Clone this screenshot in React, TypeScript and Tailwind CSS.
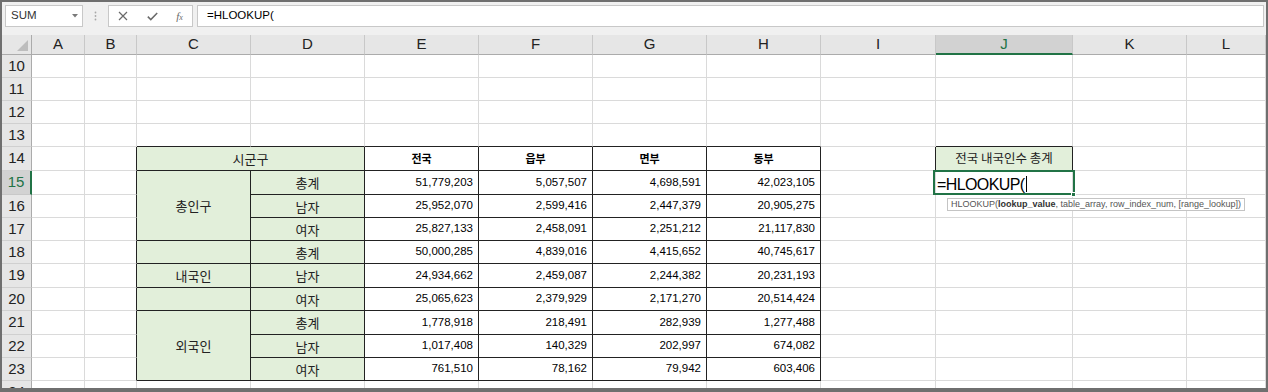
import React from "react";

type Kind = "label" | "head" | "num" | "title";
type Cell = { text?: string; kind?: Kind; rs?: number; cs?: number; fill?: boolean };

const COLS = ["A", "B", "C", "D", "E", "F", "G", "H", "I", "J", "K", "L"];
const ROWS = [10, 11, 12, 13, 14, 15, 16, 17, 18, 19, 20, 21, 22, 23, 24];

const NUMBERS: Record<number, string[]> = {
	15: ["51,779,203", "5,057,507", "4,698,591", "42,023,105"],
	16: ["25,952,070", "2,599,416", "2,447,379", "20,905,275"],
	17: ["25,827,133", "2,458,091", "2,251,212", "21,117,830"],
	18: ["50,000,285", "4,839,016", "4,415,652", "40,745,617"],
	19: ["24,934,662", "2,459,087", "2,244,382", "20,231,193"],
	20: ["25,065,623", "2,379,929", "2,171,270", "20,514,424"],
	21: ["1,778,918", "218,491", "282,939", "1,277,488"],
	22: ["1,017,408", "140,329", "202,997", "674,082"],
	23: ["761,510", "78,162", "79,942", "603,406"],
};

const ROW_SPAN: Record<number, string> = { 1: "", 3: "row-span-3" };
const COL_SPAN: Record<number, string> = { 1: "", 2: "col-span-2" };

const KIND_CLASS: Record<Kind, string> = {
	label: "justify-center font-['Noto_Sans_CJK_KR',sans-serif] text-[13px] text-[#222]",
	head: "justify-center font-['Noto_Sans_CJK_KR',sans-serif] text-[11px] font-bold text-black",
	num: "justify-end pr-[5px] text-[11.5px] text-black",
	title: "justify-center font-['Noto_Sans_CJK_KR',sans-serif] text-[12.5px] text-[#222]",
};

function buildCells() {
	const cells: Record<string, Cell> = {};
	cells.C14 = { text: "시군구", kind: "label", cs: 2, fill: true };
	["전국", "읍부", "면부", "동부"].forEach((t, i) => {
		cells[`${"EFGH"[i]}14`] = { text: t, kind: "head" };
	});
	cells.C15 = { text: "총인구", kind: "label", rs: 3, fill: true };
	cells.C18 = { kind: "label", fill: true };
	cells.C19 = { text: "내국인", kind: "label", fill: true };
	cells.C20 = { kind: "label", fill: true };
	cells.C21 = { text: "외국인", kind: "label", rs: 3, fill: true };
	const sub = ["총계", "남자", "여자"];
	for (let r = 15; r <= 23; r++) {
		cells[`D${r}`] = { text: sub[(r - 15) % 3], kind: "label", fill: true };
		NUMBERS[r].forEach((n, i) => {
			cells[`${"EFGH"[i]}${r}`] = { text: n, kind: "num" };
		});
	}
	cells.J14 = { text: "전국 내국인수 총계", kind: "title", fill: true };
	return cells;
}

const CELLS = buildCells();

// cells hidden under a merged range
const COVERED = new Set<string>();
Object.entries(CELLS).forEach(([key, cell]) => {
	const ci = COLS.indexOf(key[0]);
	const r = Number(key.slice(1));
	for (let dr = 0; dr < (cell.rs ?? 1); dr++)
		for (let dc = 0; dc < (cell.cs ?? 1); dc++)
			if (dr || dc) COVERED.add(`${COLS[ci + dc]}${r + dr}`);
});

function isBoxed(ci: number, r: number) {
	return (ci >= 2 && ci <= 7 && r >= 14 && r <= 23) || (ci === 9 && r === 14);
}

function FormulaBar() {
	return (
		<div className="flex h-[33px] items-start bg-[#f0f0f0] pl-[3px] pt-[3px]">
			<div className="flex h-[22px] w-[78px] items-center justify-between border border-[#c8c8c8] bg-white pl-[5px] pr-[4px]">
				<span className="text-[11.5px] text-[#333]">SUM</span>
				<svg width="6" height="4" viewBox="0 0 6 4">
					<path d="M0 0h6L3 3.5z" fill="#7a7a7a" />
				</svg>
			</div>
			<div className="flex h-[22px] w-[25px] items-center justify-center">
				<svg width="3" height="10" viewBox="0 0 3 10">
					<circle cx="1.5" cy="1.5" r="0.9" fill="#a8a8a8" />
					<circle cx="1.5" cy="5" r="0.9" fill="#a8a8a8" />
					<circle cx="1.5" cy="8.5" r="0.9" fill="#a8a8a8" />
				</svg>
			</div>
			<div className="flex h-[22px] w-[85px] items-center justify-around border border-[#c8c8c8] bg-white">
				<svg width="10" height="10" viewBox="0 0 10 10">
					<path d="M1 1l8 8M9 1l-8 8" stroke="#6a6a6a" strokeWidth="1.2" />
				</svg>
				<svg width="11" height="9" viewBox="0 0 11 9">
					<path d="M0.8 4.6l3 3L10.2 1" stroke="#6a6a6a" strokeWidth="1.5" fill="none" />
				</svg>
				<span className="font-['Liberation_Serif',serif] text-[11px] italic text-[#6a6a6a]">
					f<span className="text-[8px]">x</span>
				</span>
			</div>
			<div className="ml-[4px] mr-[2px] flex h-[22px] flex-1 items-center border border-[#c8c8c8] bg-white pl-[9px] text-[11.5px] text-black">
				=HLOOKUP(
			</div>
		</div>
	);
}

function RowHeader({ r }: { r: number }) {
	const active = r === 15;
	return (
		<div
			className={
				active
					? "flex items-center justify-center border-r-2 border-b border-r-[#217346] border-b-[#c8c8c8] bg-[#d2d2d2] text-[15px] text-[#217346]"
					: r === 24
						? "overflow-hidden border-r border-r-[#ababab] bg-[#e6e6e6] text-[15px] text-[#222]"
						: "flex items-center justify-center border-r border-b border-r-[#ababab] border-b-[#d0d0d0] bg-[#e6e6e6] text-[15px] text-[#222]"
			}
		>
			{r === 24 ? <div className="flex h-[23px] items-center justify-center">{r}</div> : r}
		</div>
	);
}

function ActiveCell() {
	return (
		<div className="relative flex items-start border-r border-b border-r-[#dadada] border-b-[#dadada] bg-white">
			<div className="flex items-start pl-[1px] pt-[6px] text-[16px] leading-none tracking-[-0.6px] text-black">
				=HLOOKUP(
				<span className="ml-[1px] mt-[-1px] h-[16px] w-px bg-black" />
			</div>
			<div className="absolute -left-[3px] -top-[1px] h-[25px] w-[142px] border-2 border-[#217346]" />
			<div className="absolute left-[135px] top-[21px] h-[5px] w-[5px] border border-white bg-[#217346]" />
			<div className="absolute left-[11px] top-[27px] z-10 whitespace-nowrap border border-[#c4c4c4] bg-white px-[3px] text-[9px] leading-[11px] text-[#555]">
				HLOOKUP(<b className="text-[#333]">lookup_value</b>, table_array, row_index_num, [range_lookup])
			</div>
		</div>
	);
}

function SheetCell({ ci, r }: { ci: number; r: number }) {
	const key = `${COLS[ci]}${r}`;
	if (key === "J15") return <ActiveCell />;
	const cell = CELLS[key] ?? {};
	const rs = cell.rs ?? 1;
	const cs = cell.cs ?? 1;
	const rightBlack = isBoxed(ci, r) || isBoxed(ci + cs, r);
	const bottomBlack = isBoxed(ci, r) || isBoxed(ci, r + rs);
	const classes = [
		"flex items-center leading-none",
		ROW_SPAN[rs],
		COL_SPAN[cs],
		"border-r",
		r === 24 ? "" : "border-b",
		rightBlack ? "border-r-[#222]" : "border-r-[#dadada]",
		bottomBlack ? "border-b-[#222]" : "border-b-[#dadada]",
		cell.fill ? "bg-[#e2efda]" : "bg-white",
		cell.kind ? KIND_CLASS[cell.kind] : "",
	];
	return <div className={classes.join(" ")}>{cell.text}</div>;
}

function Sheet() {
	return (
		<div className="grid grid-cols-[30px_53px_52px_114px_114px_114px_114px_114px_114px_115px_137px_114px_79px] grid-rows-[20px_23px_23px_23px_23px_24px_24px_23px_23px_23px_24px_23px_24px_23px_23px_7px]">
			{/* select-all corner */}
			<div className="flex items-end justify-end border-r border-b border-[#ababab] bg-[#e6e6e6] pb-[3px] pr-[3px]">
				<svg width="11" height="11" viewBox="0 0 11 11">
					<path d="M11 0V11H0z" fill="#bdbdbd" />
				</svg>
			</div>
			{COLS.map((c) =>
				c === "J" ? (
					<div
						key={c}
						className="flex items-center justify-center border-r border-b-2 border-r-[#c8c8c8] border-b-[#217346] bg-[#d2d2d2] text-[15px] text-[#217346]"
					>
						{c}
					</div>
				) : (
					<div
						key={c}
						className="flex items-center justify-center border-r border-b border-r-[#c8c8c8] border-b-[#ababab] bg-[#e6e6e6] text-[15px] text-[#222]"
					>
						{c}
					</div>
				),
			)}
			{ROWS.map((r) => (
				<React.Fragment key={r}>
					<RowHeader r={r} />
					{COLS.map((c, ci) =>
						COVERED.has(`${c}${r}`) ? null : <SheetCell key={c} ci={ci} r={r} />,
					)}
				</React.Fragment>
			))}
		</div>
	);
}

export default function App() {
	return (
		<div className="h-[392px] w-[1268px] overflow-hidden border-2 border-b-4 border-[#6f6f6f] bg-white font-['Liberation_Sans',Arial,sans-serif]">
			<FormulaBar />
			<Sheet />
		</div>
	);
}
